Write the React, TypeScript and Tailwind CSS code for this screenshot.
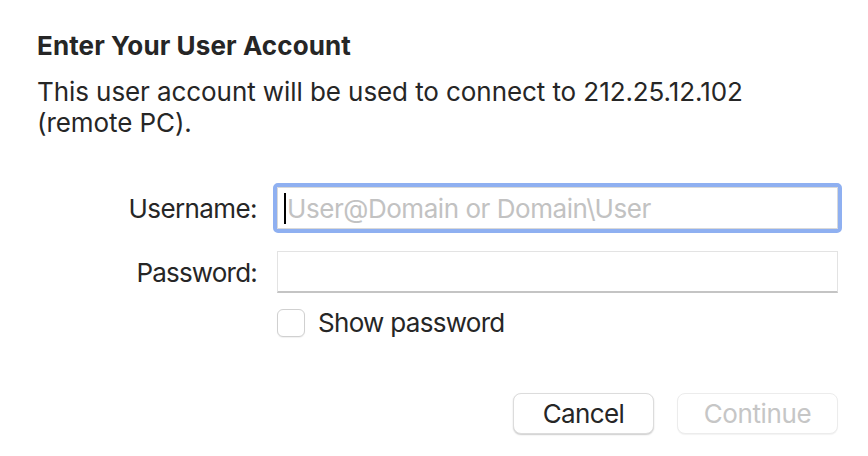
import React from "react";

export default function App() {
  const font = { fontFamily: "Inter, 'Liberation Sans', sans-serif" };
  return (
    <div
      className="w-[868px] h-[456px] bg-white text-[#262626] antialiased overflow-hidden"
      style={font}
    >
      <div className="pt-[30px] pl-[37px] pr-[30px]">
        <div className="text-[26px] leading-[31px] font-bold tracking-[0.1px]">Enter Your User Account</div>
        <div className="mt-[15px] text-[26px] leading-[31px] tracking-[-0.08px]">
          This user account will be used to connect to 212.25.12.102
          <br />
          (remote PC).
        </div>

        <div className="mt-[49px] grid grid-cols-[220px_561px] gap-x-[20px] items-center">
          <div className="text-right text-[26px] leading-[31px] tracking-[-0.6px]">Username:</div>
          <div className="h-[42px] bg-white border border-[#d9d9d9] outline-[4px] outline-solid outline-[#8fb0f1] rounded-[1px] flex items-center pl-[6px]">
            <span className="w-[2px] h-[31px] bg-black mr-[1px]"></span>
            <span className="text-[26px] leading-[31px] text-[#c2c2c2] tracking-[-0.45px]">User@Domain or Domain\User</span>
          </div>

          <div className="mt-[22px] text-right text-[26px] leading-[31px] tracking-[-0.8px]">Password:</div>
          <div className="mt-[22px] h-[42px] bg-white border border-[#e3e3e3] border-b-[#c4c4c4] border-b-2"></div>

          <div></div>
          <div className="mt-[14px] flex items-center">
            <div className="w-[28px] h-[28px] rounded-[6px] border border-[#d0d0d0] bg-white shadow-[0_1px_1px_rgba(0,0,0,0.06)]"></div>
            <span className="ml-[13px] text-[26px] leading-[31px] tracking-[-0.7px]">Show password</span>
          </div>
        </div>

        <div className="mt-[55px] flex justify-end gap-[23px]">
          <button className="w-[141px] h-[41px] rounded-[8px] bg-white border border-[#dcdcdc] shadow-[0_1px_1.5px_rgba(0,0,0,0.2)] text-[26px] leading-[31px] text-[#262626] tracking-[-0.6px]">
            Cancel
          </button>
          <button className="w-[161px] h-[41px] rounded-[8px] bg-white border border-[#ececec] shadow-[0_1px_1px_rgba(0,0,0,0.05)] text-[26px] leading-[31px] text-[#c6c6c6] tracking-[-0.4px]">
            Continue
          </button>
        </div>
      </div>
    </div>
  );
}
